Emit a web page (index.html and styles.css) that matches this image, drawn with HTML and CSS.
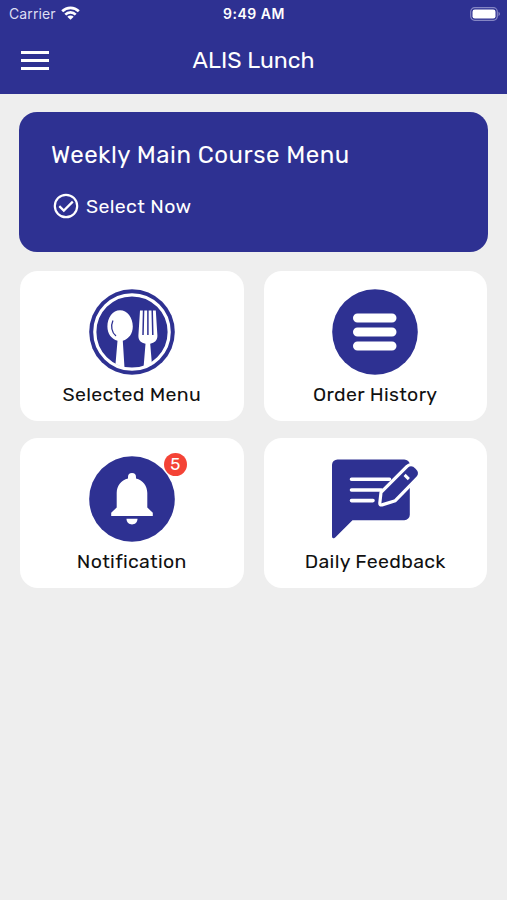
FILE: index.html
```html
<!DOCTYPE html>
<html lang="en">

<head>
    <meta charset="UTF-8">
    <title>ALIS Lunch</title>
    <link rel="stylesheet" href="styles.css">
</head>

<body>
    <header class="header">
        <div class="status-bar">
            <div class="carrier">
                <span>Carrier</span>
                <svg class="wifi" width="19" height="14" viewBox="0 0 19 14" fill="none" stroke="#fff" stroke-width="2.7">
                    <path d="M1.2 5.2a11.8 11.8 0 0 1 16.6 0" />
                    <path d="M4.3 8.6a7.4 7.4 0 0 1 10.4 0" />
                    <path d="M9.5 13.8L6.3 10.7a4.6 4.6 0 0 1 6.4 0z" fill="#fff" stroke="none" />
                </svg>
            </div>
            <div class="time">9:49 AM</div>
            <svg class="battery" width="31" height="14" viewBox="0 0 31 14">
                <rect x="0.7" y="0.7" width="26.6" height="12.6" rx="4" fill="none" stroke="#8586c4" stroke-width="1.2" />
                <rect x="2.5" y="2.5" width="23" height="9" rx="2.3" fill="#fff" />
                <path d="M28.5 4.8q3 2.2 0 4.4z" fill="#8586c4" />
            </svg>
        </div>
        <div class="nav-bar">
            <button class="menu-button" aria-label="Menu">
                <span></span>
                <span></span>
                <span></span>
            </button>
            <h1>ALIS Lunch</h1>
        </div>
    </header>

    <main class="container">
        <section class="weekly">
            <h2>Weekly Main Course Menu</h2>
            <a class="select-now">
                <svg width="26" height="26" viewBox="0 0 26 26" fill="none" stroke="#fff" stroke-width="2.2">
                    <circle cx="13" cy="13" r="11.2" />
                    <path d="M6.3 13.1l4.5 4.5 9-9" />
                </svg>
                <span>Select Now</span>
            </a>
        </section>

        <div class="grid">
            <div class="card">
                <div class="icon">
                    <svg width="86" height="86" viewBox="0 0 86 86">
                        <circle class="blue" cx="43" cy="43" r="42.8" />
                        <circle cx="43" cy="43" r="37.2" fill="none" stroke="#fff" stroke-width="3.2" />
                        <path fill="#fff" d="M31 21.3c7.3 0 12.8 7.3 12.8 16.2 0 7.2-4 12.5-10 14.2L35.5 79l-9-4 2-23.3C22.4 50 18.4 44.7 18.4 37.5 18.4 28.6 23.7 21.3 31 21.3z" />
                        <path fill="none" stroke="#2e3192" stroke-width="1.3" stroke-linecap="round" d="M23.8 32c-2.3 5-1 11.5 2.8 14.5" />
                        <path fill="#fff" d="M51 21.5h15.8l1.6 25c.2 5-3 7.5-7.2 8.2L63 76l-8.5 3 2-24.3c-4.5-.7-7.3-3.2-7.1-8.2z" />
                        <path fill="none" stroke="#2e3192" stroke-width="1.5" d="M54.6 20.5L54 46M58.9 20.5V46M63.2 20.5l.6 25.5" />
                    </svg>
                </div>
                <p>Selected Menu</p>
            </div>
            <div class="card">
                <div class="icon">
                    <svg width="86" height="86" viewBox="0 0 86 86">
                        <circle class="blue" cx="43" cy="43" r="42.8" />
                        <path fill="none" stroke="#fff" stroke-width="9" stroke-linecap="round" d="M25.5 29H60M25.5 43H60M25.5 57H60" />
                    </svg>
                </div>
                <p>Order History</p>
            </div>
            <div class="card">
                <div class="icon">
                    <svg width="86" height="86" viewBox="0 0 86 86">
                        <circle class="blue" cx="43" cy="43" r="42.8" />
                        <path fill="#fff" d="M39 22.5V21a4 4 0 0 1 8 0v1.5c7 1.8 11.3 7.5 11.3 14.5v14.5l5.5 5.2V60H22.2v-3.3l5.5-5.2V37c0-7 4.3-12.7 11.3-14.5z" />
                        <path fill="#fff" d="M37.5 62.7h11c0 7.6-11 7.6-11 0z" />
                    </svg>
                    <span class="badge">5</span>
                </div>
                <p>Notification</p>
            </div>
            <div class="card">
                <div class="icon">
                    <svg width="86" height="86" viewBox="0 0 86 86">
                        <path class="blue" d="M5.500 3.500h66.800a5.500 5.500 0 0 1 5.500 5.500v49.700a5.500 5.500 0 0 1-5.500 5.500H20.500L3.200 81.500Q0 83.700 0 80.200V9a5.500 5.500 0 0 1 5.500-5.500z" />
                        <path fill="none" stroke="#fff" stroke-width="3.6" stroke-linecap="round" d="M19.5 23.2h38M19.5 34h30M19.5 44.6h21.5" />
                        <path class="blue" stroke="#fff" stroke-width="3.2" stroke-linejoin="round" d="M49 36.4L75 10.4c6-5.200 16.200 4.600 11 11L63.300 44.700l-13.300 4.200q-2.300.6-2.200-1.800z" />
                        <path fill="none" stroke="#fff" stroke-width="3" d="M72.6 18.9l4.2 4.2" />
                    </svg>
                </div>
                <p>Daily Feedback</p>
            </div>
        </div>
    </main>
</body>

</html>
```
FILE: styles.css
```css
body {
    font-family: Rubik, Roboto, sans-serif;
    margin: 0;
    background-color: #eeeeee;
    color: #111;
}

.header {
    height: 94px;
    background-color: #2e3192;
    color: #fff;
}

.status-bar {
    display: grid;
    grid-template-columns: 1fr auto 1fr;
    align-items: center;
    height: 27px;
    padding: 0 6px 0 9px;
    font-family: Inter, sans-serif;
    font-size: 14px;
}

.carrier {
    display: flex;
    align-items: center;
    gap: 5px;
    color: #dddef2;
    letter-spacing: 0.1px;
}

.wifi {
    margin-bottom: 2px;
}

.time {
    margin-right: 2px;
    font-weight: 600;
    letter-spacing: 0.5px;
}

.battery {
    justify-self: end;
}

.nav-bar {
    display: grid;
    grid-template-columns: 50px 1fr 50px;
    align-items: center;
    height: 66px;
}

.menu-button {
    display: flex;
    flex-direction: column;
    gap: 5px;
    width: 28px;
    margin-left: 21px;
    padding: 0;
    border: none;
    background: none;
}

.menu-button span {
    height: 3px;
    background-color: #fff;
}

h1 {
    margin: 0;
    font-size: 23px;
    font-weight: 400;
    text-align: center;
    letter-spacing: 0.05px;
}

.container {
    padding: 18px 19px;
}

.weekly {
    box-sizing: border-box;
    height: 140px;
    padding: 29px 32px;
    border-radius: 18px;
    background-color: #2e3192;
    color: #fff;
}

h2 {
    margin: 0;
    font-size: 24px;
    line-height: 28px;
    font-weight: 400;
    letter-spacing: 0.5px;
}

.select-now {
    display: flex;
    align-items: center;
    gap: 7px;
    margin: 24px 0 0 2px;
    font-size: 19.5px;
    letter-spacing: 0.35px;
}

.grid {
    display: grid;
    grid-template-columns: 1fr 1fr;
    gap: 17px 20px;
    padding: 19px 1px 0 1px;
}

.card {
    box-sizing: border-box;
    height: 150px;
    padding-top: 18px;
    border-radius: 18px;
    background-color: #fff;
    text-align: center;
}

.icon {
    position: relative;
    width: 86px;
    height: 86px;
    margin: 0 auto;
}

.icon svg {
    display: block;
    overflow: visible;
}

.blue {
    fill: #2e3192;
}

.badge {
    position: absolute;
    top: -3px;
    right: -12px;
    width: 23px;
    height: 23px;
    border-radius: 50%;
    background-color: #f44336;
    color: #fff;
    font-size: 17px;
    line-height: 23px;
}

.card p {
    margin: 8px 0 0;
    font-size: 19.5px;
    line-height: 24px;
    letter-spacing: 0.32px;
}
```
